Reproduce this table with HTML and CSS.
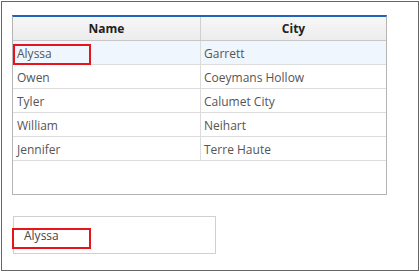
FILE: index.html
```html
<!DOCTYPE html>
<html lang="en">
<head>
  <meta charset="UTF-8">
  <title>Grid Selection</title>
  <link rel="stylesheet" href="styles.css">
</head>
<body>
  <div class="frame">
    <div class="grid">
      <table class="grid-table">
        <thead>
          <tr>
            <th class="col-name">Name</th>
            <th class="col-city">City</th>
          </tr>
        </thead>
        <tbody>
          <tr class="selected"><td>Alyssa</td><td>Garrett</td></tr>
          <tr><td>Owen</td><td>Coeymans Hollow</td></tr>
          <tr><td>Tyler</td><td>Calumet City</td></tr>
          <tr><td>William</td><td>Neihart</td></tr>
          <tr><td>Jennifer</td><td>Terre Haute</td></tr>
        </tbody>
      </table>
    </div>

    <div class="output">Alyssa</div>

    <!-- highlight markers -->
    <div class="mark mark-cell"></div>
    <div class="mark mark-output"></div>
  </div>
</body>
</html>
```

FILE: styles.css
```css
body {
  margin: 0;
  padding: 0;
  background-color: #fff;
  font-family: "Open Sans", "Noto Sans", Arial, sans-serif;
}

.frame {
  position: relative;
  margin: 1px;
  border: 1px solid #666;
  padding: 13px 0 0 10px;
  width: 406px;
  height: 255px;
}

.grid {
  width: 373px;
  height: 177px;
  border: 1px solid #b4b4b4;
  border-top: 2px solid #1e64b8;
  background-color: #fff;
}

.grid-table {
  width: 100%;
  border-collapse: collapse;
  table-layout: fixed;
  font-size: 12px;
}

.col-name {
  width: 187px;
}

.grid-table th {
  height: 23px;
  padding: 0;
  font-weight: bold;
  color: #222;
  text-align: center;
  background: linear-gradient(#f7f7f7, #ececec);
  border-bottom: 1px solid #c8c8c8;
  border-right: 1px solid #d0d0d0;
}

.grid-table th:last-child,
.grid-table td:last-child {
  border-right: none;
}

.grid-table td {
  height: 22px;
  padding: 1px 0 0 4px;
  color: #555;
  border-bottom: 1px solid #dcdcdc;
  border-right: 1px solid #dcdcdc;
  white-space: nowrap;
}

.grid-table td + td {
  padding-left: 3px;
}

.grid-table tr.selected td {
  background-color: #eff6fd;
}

.output {
  margin: 21px 0 0 1px;
  width: 191px;
  height: 36px;
  line-height: 38px;
  padding-left: 10px;
  border: 1px solid #d0d0d0;
  font-size: 12px;
  color: #444;
}

.mark {
  position: absolute;
  border: 2px solid #e8141c;
  box-sizing: border-box;
}

.mark-cell {
  left: 11px;
  top: 42px;
  width: 78px;
  height: 21px;
}

.mark-output {
  left: 10px;
  top: 226px;
  width: 79px;
  height: 21px;
}
```
